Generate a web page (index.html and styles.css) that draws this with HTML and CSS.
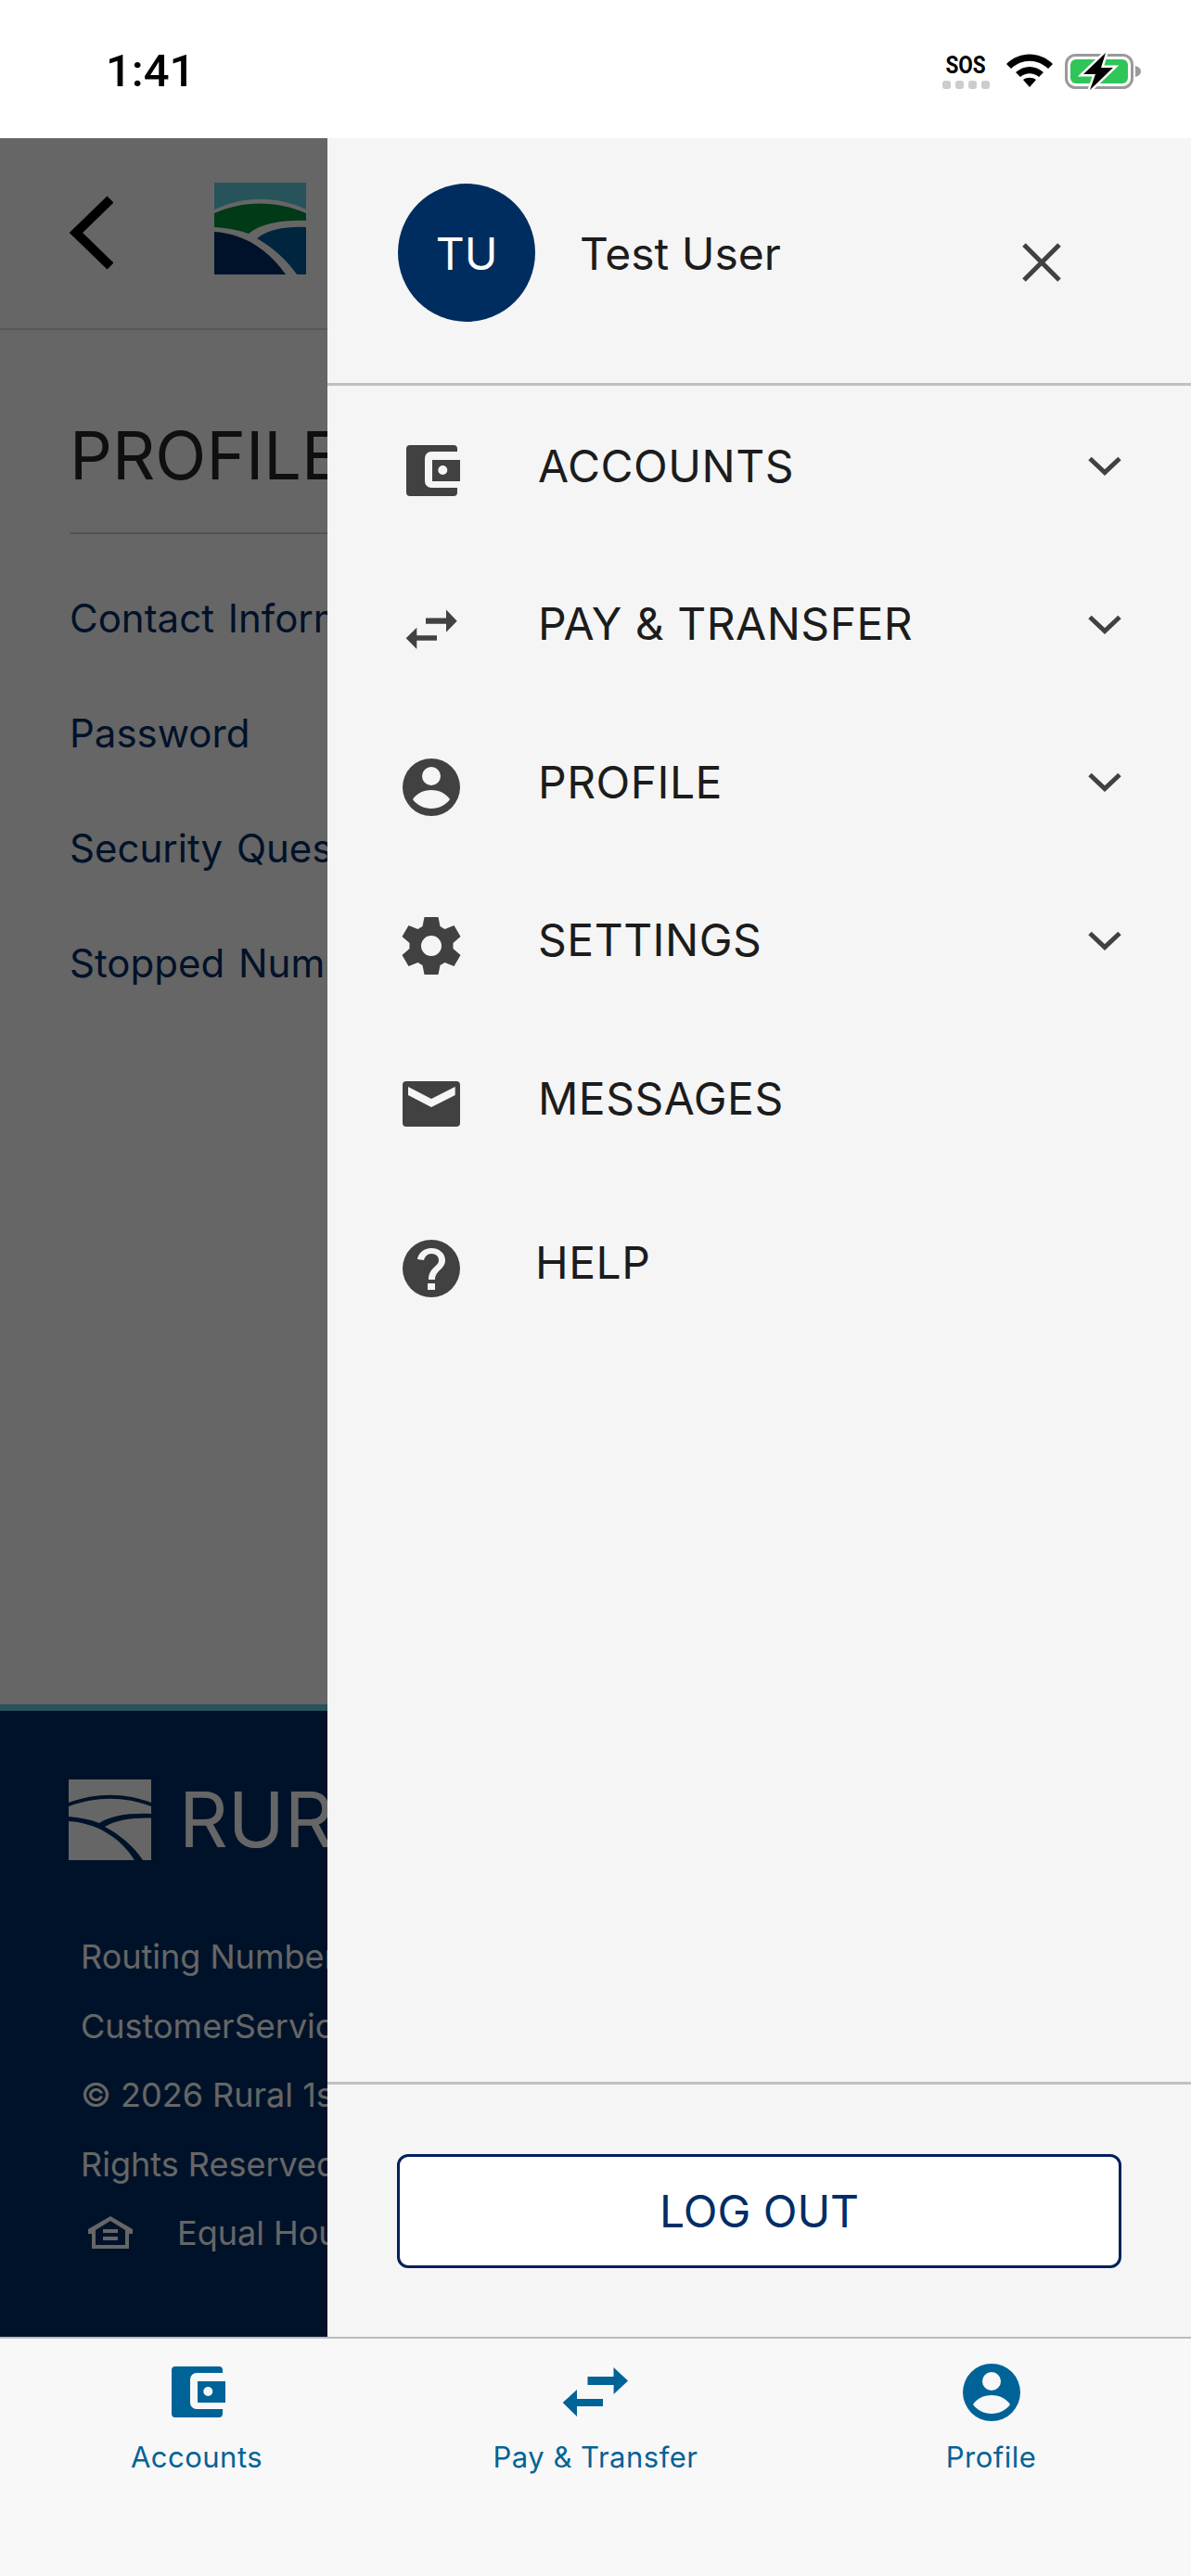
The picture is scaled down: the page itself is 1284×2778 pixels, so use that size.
FILE: index.html
```html
<!DOCTYPE html>
<html lang="en">
<head>
    <meta charset="UTF-8">
    <meta name="viewport" content="width=device-width, initial-scale=1.0">
    <title>Profile</title>
    <link rel="stylesheet" href="styles.css">
</head>
<body>
    <div class="status-bar">
        <span class="status-time">1:41</span>
        <div class="status-icons">
            <div class="sos">
                <span class="sos-text">SOS</span>
                <div class="sos-dots"><i></i><i></i><i></i><i></i></div>
            </div>
            <svg class="wifi" viewBox="0 0 50 36" width="50" height="36">
                <path d="M0 11C14-3 36-3 50 11l-5 5C33 5 17 5 5 16z"/>
                <path d="M10 20c9-8 21-8 30 0l-5 5c-6-5-14-5-20 0z"/>
                <path d="M18 28c4-3 10-3 14 0l-7 8z"/>
            </svg>
            <svg class="battery" viewBox="0 0 84 40" width="84" height="40">
                <rect x="1.5" y="2.5" width="71" height="35" rx="10" fill="none" stroke="#9a9a9a" stroke-width="3"/>
                <rect x="6" y="7" width="62" height="26" rx="6" fill="#30c559"/>
                <path d="M76 14c4 1 6 3 6 6s-2 5-6 6z" fill="#9a9a9a"/>
                <path d="M44 0 20 23h13l-6 17 25-24H39z" stroke="#fff" stroke-width="5" paint-order="stroke"/>
            </svg>
        </div>
    </div>

    <div class="screen">
        <div class="page">
            <div class="page-header">
                <svg class="back" viewBox="0 0 47 80" width="47" height="80">
                    <path d="M44 4 7 40l37 36" fill="none" stroke="#000" stroke-width="10"/>
                </svg>
                <svg class="brand" viewBox="0 0 99 99" width="99" height="99">
                    <rect width="99" height="99" fill="#fff"/>
                    <path d="M0 0h99v29C68 14 31 14 0 29z" fill="#62cfe0"/>
                    <path d="M0 33C31 19 68 19 99 33v8C75 40 50 44 37 55 26 51 13 49 0 48z" fill="#009139"/>
                    <path d="M0 53c32 2 58 19 77 46H0z" fill="#002d66"/>
                    <path d="M46 60c12-9 29-13 53-12v51H89C78 83 63 70 46 60z" fill="#005d9e"/>
                </svg>
            </div>
            <div class="page-content">
                <h1>PROFILE</h1>
                <ul class="profile-links">
                    <li>Contact Information</li>
                    <li>Password</li>
                    <li>Security Questions</li>
                    <li>Stopped Numbers</li>
                </ul>
            </div>
            <div class="page-footer">
                <div class="footer-logo">
                    <svg viewBox="0 0 89 87" width="89" height="87">
                        <path d="M0 0h89v25C60 14 30 14 0 25z"/>
                        <path d="M0 29c30-11 60-11 89 0v8C65 36 45 39 33 47 23 43 12 41 0 40z"/>
                        <path d="M0 45c30 2 55 17 71 42H0z"/>
                        <path d="M39 51c11-7 29-10 50-9.5V87H80C70 72 56 60 39 51z"/>
                    </svg>
                    <span class="footer-name">RURAL 1ST</span>
                </div>
                <div class="footer-text">
                    <p>Routing Number</p>
                    <p>CustomerService</p>
                    <p>© 2026 Rural 1st</p>
                    <p>Rights Reserved</p>
                    <p class="equal">
                        <svg viewBox="0 0 48 36" width="48" height="36">
                            <path fill-rule="evenodd" d="M24 0 48 14v5h-4v16H4V19H0v-5zM24 5 8 15v16h32V15zM16 14h16v4H16zM16 22h16v4H16z"/>
                        </svg>
                        <span>Equal Housing</span>
                    </p>
                </div>
            </div>
            <div class="scrim"></div>
        </div>

        <div class="drawer">
            <div class="drawer-head">
                <div class="avatar">TU</div>
                <span class="user-name">Test User</span>
                <svg class="close" viewBox="0 0 44 44" width="44" height="44">
                    <path d="M3 3l38 38M41 3 3 41" fill="none" stroke="#414141" stroke-width="5"/>
                </svg>
            </div>
            <div class="menu">
                <div class="menu-item">
                    <svg class="menu-icon" viewBox="0 0 62 62" width="62" height="62"><use href="#i-wallet"/></svg>
                    <span class="menu-label">ACCOUNTS</span>
                    <svg class="chevron" viewBox="0 0 36 22" width="36" height="22"><use href="#i-chevron"/></svg>
                </div>
                <div class="menu-item">
                    <svg class="menu-icon" viewBox="0 0 62 62" width="62" height="62"><use href="#i-swap"/></svg>
                    <span class="menu-label">PAY &amp; TRANSFER</span>
                    <svg class="chevron" viewBox="0 0 36 22" width="36" height="22"><use href="#i-chevron"/></svg>
                </div>
                <div class="menu-item">
                    <svg class="menu-icon" viewBox="0 0 62 62" width="62" height="62"><use href="#i-user"/></svg>
                    <span class="menu-label">PROFILE</span>
                    <svg class="chevron" viewBox="0 0 36 22" width="36" height="22"><use href="#i-chevron"/></svg>
                </div>
                <div class="menu-item">
                    <svg class="menu-icon" viewBox="0 0 62 62" width="62" height="62"><use href="#i-gear"/></svg>
                    <span class="menu-label">SETTINGS</span>
                    <svg class="chevron" viewBox="0 0 36 22" width="36" height="22"><use href="#i-chevron"/></svg>
                </div>
                <div class="menu-item">
                    <svg class="menu-icon" viewBox="0 0 62 62" width="62" height="62"><use href="#i-mail"/></svg>
                    <span class="menu-label">MESSAGES</span>
                </div>
                <div class="menu-item help">
                    <svg class="menu-icon" viewBox="0 0 62 62" width="62" height="62"><use href="#i-help"/></svg>
                    <span class="menu-label">HELP</span>
                </div>
            </div>
            <div class="drawer-foot">
                <button class="logout">LOG OUT</button>
            </div>
        </div>
    </div>

    <div class="tab-bar">
        <div class="tab">
            <svg viewBox="0 0 62 62" width="62" height="62"><use href="#i-wallet"/></svg>
            <span>Accounts</span>
        </div>
        <div class="tab">
            <svg viewBox="0 0 80 62" width="80" height="62"><use href="#i-swap-large"/></svg>
            <span>Pay &amp; Transfer</span>
        </div>
        <div class="tab">
            <svg viewBox="0 0 62 62" width="62" height="62"><use href="#i-user"/></svg>
            <span>Profile</span>
        </div>
    </div>

    <!-- shared icons -->
    <svg class="icon-defs" width="0" height="0">
        <defs>
            <path id="i-wallet" fill-rule="evenodd" d="M8 3h47a4 4 0 0 1 4 4v3H31a7 7 0 0 0-7 7v25a7 7 0 0 0 7 7h28v5a4 4 0 0 1-4 4H8a4 4 0 0 1-4-4V7a4 4 0 0 1 4-4zM32 19h30v23H32zM43.3 25a5 5 0 1 0 0 10 5 5 0 0 0 0-10z"/>
            <path id="i-swap" d="M25 18.5h22V9.5L58.7 21.7 47 33.7v-9H25zM3.7 40.3 15.3 28.7v8.600H37v5.500H15.300V52z"/>
            <path id="i-swap-large" d="M31.5 14h28V4L75 18.5 59.6 33V23H31.5zM4.7 42 20 28v10h28v8H20v11z"/>
            <path id="i-user" fill-rule="evenodd" d="M31 0a31 31 0 1 1 0 62 31 31 0 0 1 0-62zM31 9a10 10 0 1 0 0 20 10 10 0 0 0 0-20zM31 34c-9 0-16 4-20 10 4 6 12 10 20 10s16-4 20-10c-4-6-11-10-20-10z"/>
            <path id="i-gear" fill-rule="evenodd" d="M23.5 0h15l2 10 5 3 10-4 7 12-8 7v6l8 7-7 12-10-4-5 3-2 10h-15l-2-10-5-3-10 4-7-12 8-7v-6l-8-7 7-12 10 4 5-3zM31 20a11 11 0 1 0 0 22 11 11 0 0 0 0-22z"/>
            <path id="i-mail" fill-rule="evenodd" d="M4 7h54a4 4 0 0 1 4 4v41a4 4 0 0 1-4 4H4a4 4 0 0 1-4-4V11a4 4 0 0 1 4-4zM6 13v9l25 13 25.7-13v-9L31 26z"/>
            <path id="i-help" fill-rule="evenodd" d="M31 0a31 31 0 1 1 0 62 31 31 0 0 1 0-62zM27 47v7h8v-7zM31 9c-8 0-14 5-15 12l7 1c1-4 4-7 8-7 5 0 8 3 8 7 0 7-11 8-11 21h7c0-10 11-11 11-21 0-7-6-13-15-13z"/>
            <path id="i-chevron" d="M2 3.5l16 15 16-15" fill="none" stroke="currentColor" stroke-width="5"/>
        </defs>
    </svg>
</body>
</html>
```

FILE: styles.css
```css
* {
    margin: 0;
    padding: 0;
    box-sizing: border-box;
}

body {
    width: 1284px;
    height: 2778px;
    display: flex;
    flex-direction: column;
    overflow: hidden;
    font-family: 'Inter', sans-serif;
    background-color: #fff;
}

.icon-defs {
    position: absolute;
}

/* status bar */
.status-bar {
    height: 149px;
    flex-shrink: 0;
    background-color: #fff;
    display: flex;
    justify-content: space-between;
    padding: 50px 52px 0 114px;
}

.status-time {
    font-family: 'Roboto', sans-serif;
    font-size: 49px;
    font-weight: 500;
    line-height: 54px;
    color: #000;
}

.status-icons {
    display: flex;
    gap: 13px;
    height: 44px;
    margin-top: 6px;
}

.sos {
    width: 52px;
    display: flex;
    flex-direction: column;
    align-items: center;
    margin: 3px 5px 0 0;
    gap: 4px;
}

.sos-text {
    font-family: 'Roboto', sans-serif;
    font-size: 25px;
    font-weight: 700;
    line-height: 24px;
    transform: scaleX(.9);
}

.sos-dots {
    display: flex;
    gap: 5px;
}

.sos-dots i {
    width: 9px;
    height: 9px;
    border-radius: 3px;
    background-color: #ccc;
}

.wifi {
    margin-top: 2px;
}

.battery {
    margin-top: 1px;
    overflow: visible;
}

/* page under the drawer */
.screen {
    flex: 1;
    position: relative;
    overflow: hidden;
}

.page {
    height: 100%;
    width: 100%;
    display: flex;
    flex-direction: column;
    position: relative;
    background-color: #fff;
}

.page-header {
    height: 207px;
    flex-shrink: 0;
    display: flex;
    align-items: center;
    gap: 109px;
    padding: 0 0 11px 75px;
    border-bottom: 2px solid #ddd;
}

.back {
    margin-top: 10px;
}

.page-content {
    flex: 1;
    padding: 95px 0 0 75px;
}

.page-content h1 {
    font-size: 72px;
    font-weight: 400;
    line-height: 80px;
    color: #262626;
    padding-bottom: 43px;
    border-bottom: 2px solid #ccc;
}

.profile-links {
    list-style: none;
    margin-top: 29px;
}

.profile-links li {
    font-size: 42px;
    line-height: 124px;
    word-spacing: 3px;
    color: #002d66;
    white-space: nowrap;
}

.page-footer {
    height: 682px;
    flex-shrink: 0;
    background-color: #002d66;
    border-top: 7px solid #62cfe0;
    padding: 74px 0 0 74px;
    color: #fff;
}

.footer-logo {
    display: flex;
    align-items: center;
    gap: 30px;
    fill: #fff;
}

.footer-name {
    font-size: 82px;
    line-height: 87px;
    white-space: nowrap;
}

.footer-text {
    margin: 67px 0 0 13px;
    font-size: 36px;
    line-height: 74.5px;
    white-space: nowrap;
}

.equal {
    display: flex;
    align-items: center;
    gap: 48px;
    padding-left: 8px;
    fill: #fff;
}

.scrim {
    position: absolute;
    inset: 0;
    background-color: rgba(0, 0, 0, 0.6);
}

/* drawer */
.drawer {
    position: absolute;
    top: 0;
    right: 0;
    bottom: 0;
    width: 931px;
    display: flex;
    flex-direction: column;
    background-color: #f5f5f5;
}

.drawer-head {
    height: 267px;
    flex-shrink: 0;
    display: flex;
    align-items: flex-start;
    padding: 49px 0 0 76px;
    border-bottom: 3px solid #c0c0c0;
    position: relative;
}

.avatar {
    width: 148px;
    height: 149px;
    border-radius: 50%;
    background-color: #002d5f;
    color: #fff;
    font-size: 48px;
    display: flex;
    align-items: center;
    justify-content: center;
    padding-top: 2px;
}

.user-name {
    font-size: 48px;
    line-height: 58px;
    margin: 47px 0 0 48px;
    color: #1c1c1c;
}

.close {
    position: absolute;
    left: 748px;
    top: 112px;
}

.menu {
    flex: 1;
    padding-top: 1px;
}

.menu-item {
    height: 170.5px;
    display: flex;
    align-items: center;
    padding-left: 81px;
    padding-right: 75px;
    color: #414141;
}

.menu-item.help {
    margin-top: 7px;
}

.menu-item.help .menu-label {
    margin-left: 81px;
}

.menu-icon {
    fill: #414141;
    flex-shrink: 0;
    overflow: visible;
    margin-top: 12px;
}

.menu-label {
    flex: 1;
    margin-left: 84px;
    font-size: 48px;
    letter-spacing: 0.5px;
    color: #1c1c1c;
}

.drawer-foot {
    height: 275px;
    flex-shrink: 0;
    border-top: 3px solid #c0c0c0;
    padding: 75px 75px 0;
}

.logout {
    width: 100%;
    height: 123px;
    border: 3px solid #00205b;
    border-radius: 12px;
    background-color: #fff;
    color: #002d66;
    font-family: 'Inter', sans-serif;
    font-size: 48px;
}

/* bottom tabs */
.tab-bar {
    height: 258px;
    flex-shrink: 0;
    display: grid;
    grid-template-columns: 424px 436px 417px;
    background-color: #f8f8f8;
    border-top: 2px solid #bbb;
}

.tab {
    display: flex;
    flex-direction: column;
    align-items: center;
    gap: 19px;
    padding-top: 27px;
    color: #006397;
    fill: #006397;
    font-size: 31px;
    letter-spacing: 0.5px;
}

.tab svg {
    overflow: visible;
}

.tab span {
    line-height: 40px;
}
```
